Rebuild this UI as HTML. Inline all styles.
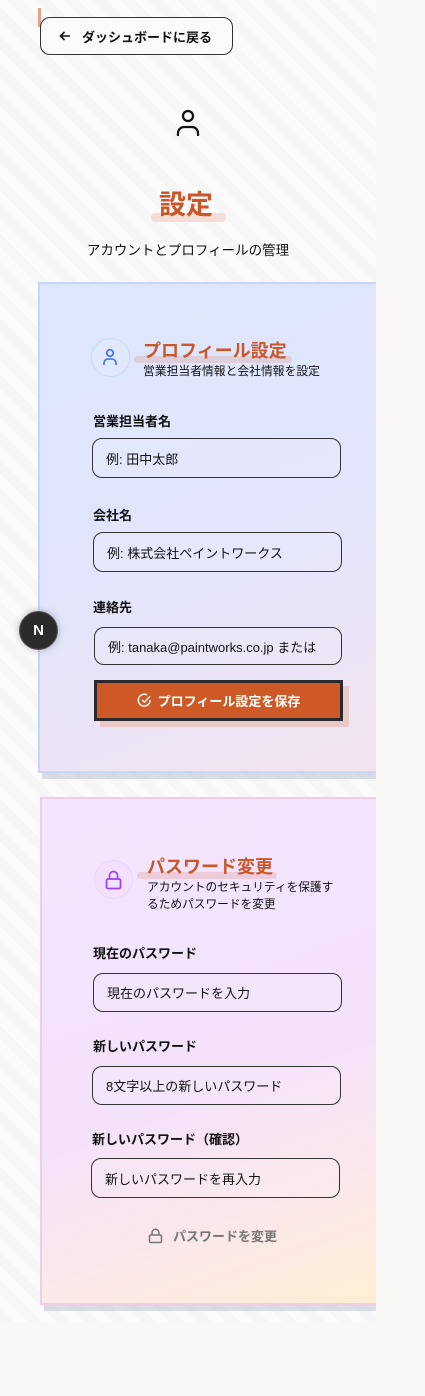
<!DOCTYPE html>
<html><head><meta charset="utf-8"><style>
*{margin:0;padding:0;box-sizing:border-box}
body{width:425px;height:1396px;background:#f9f8f7;position:relative;font-family:"Liberation Sans","Noto Sans CJK JP",sans-serif;color:#111;overflow:hidden}
.wrap{position:absolute;left:0;top:0;width:376px;height:1322px;overflow:hidden;background:repeating-linear-gradient(45deg,#f6f6f6 0 10px,#fbfbfb 10px 20px)}
.a{position:absolute}
.card{position:absolute;box-shadow:4px 6px 0 rgba(160,165,185,.35)}
.inp{position:absolute;border:1.3px solid #333;border-radius:10px;font-size:13px;padding-left:13px;display:flex;align-items:center;background:rgba(255,255,255,.1)}
.lbl{position:absolute;font-size:13px;font-weight:bold}
.ttl{position:absolute;font-size:18px;font-weight:bold;color:#c9572a}
.hl{position:absolute;height:7px;border-radius:4px}
</style></head><body>
<div class="wrap">
<div class="a" style="left:38px;top:8px;width:3px;height:19px;background:#e8a088"></div>
<div class="a" style="left:40px;top:17px;width:193px;height:38px;border:1.3px solid #333;border-radius:10px;background:#fafafa;font-size:13px;font-weight:bold;display:flex;align-items:center">
<svg style="position:absolute;left:18px;top:12px" width="12" height="12" viewBox="0 0 12 12" fill="none" stroke="#111" stroke-width="1.6"><path d="M11 6H1.5M5.5 2 1.5 6l4 4"/></svg>
<span style="position:absolute;left:41px">ダッシュボードに戻る</span></div>
<svg class="a" style="left:176px;top:109px" width="24" height="28" viewBox="0 0 24 28" fill="none" stroke="#111" stroke-width="2.2"><circle cx="12" cy="7" r="5"/><path d="M2 27v-3a6 6 0 0 1 6-6h8a6 6 0 0 1 6 6v3"/></svg>
<div class="hl" style="left:151px;top:213px;width:75px;height:9px;background:#f3ddd4"></div>
<div class="a" style="left:159px;top:183px;font-size:27px;font-weight:bold;color:#c9572a">設定</div>
<div class="a" style="left:0;width:376px;top:239px;text-align:center;font-size:13.5px">アカウントとプロフィールの管理</div>

<div class="card" style="left:38px;top:282px;width:360px;height:491px;border:2px solid #c7d5f7;background:linear-gradient(160deg,#dce6fd 0%,#e3e5fb 55%,#f4e3f0 100%)"></div>
<div class="a" style="left:91px;top:338px;width:39px;height:39px;border-radius:50%;border:1.5px solid #c7d9fb;background:#dfe8fd"></div>
<svg class="a" style="left:102px;top:348px" width="16" height="18" viewBox="0 0 16 18" fill="none" stroke="#3a6df0" stroke-width="1.6"><circle cx="8" cy="5" r="3.3"/><path d="M2 17v-2a4 4 0 0 1 4-4h4a4 4 0 0 1 4 4v2"/></svg>
<div class="hl" style="left:134px;top:356px;width:158px;background:rgba(220,200,210,.8)"></div>
<div class="ttl" style="left:143px;top:337px">プロフィール設定</div>
<div class="a" style="left:143px;top:362px;font-size:11.8px">営業担当者情報と会社情報を設定</div>
<div class="lbl" style="left:93px;top:411px">営業担当者名</div>
<div class="inp" style="left:92px;top:438px;width:249px;height:40px">例: 田中太郎</div>
<div class="lbl" style="left:93px;top:505px">会社名</div>
<div class="inp" style="left:93px;top:532px;width:249px;height:40px">例: 株式会社ペイントワークス</div>
<div class="lbl" style="left:93px;top:597px">連絡先</div>
<div class="inp" style="left:94px;top:627px;width:248px;height:38px;white-space:nowrap;overflow:hidden">例: tanaka@paintworks.co.jp または</div>
<div class="a" style="left:100px;top:686px;width:249px;height:41px;background:#e9c8c8"></div>
<div class="a" style="left:94px;top:680px;width:249px;height:41px;background:#cd5a26;border:3px solid #2a2a2e;color:#fff;font-size:13px;font-weight:bold;display:flex;align-items:center;justify-content:center;gap:6px">
<svg width="15" height="15" viewBox="0 0 16 16" fill="none" stroke="#fff" stroke-width="1.5"><path d="M14 7.5A6.3 6.3 0 1 1 10.5 2"/><path d="M5.5 7.5l2.3 2.3L14 3.5"/></svg>プロフィール設定を保存</div>

<div class="card" style="left:40px;top:797px;width:360px;height:508px;border:2px solid #efcde4;background:linear-gradient(160deg,#f4e4fd 0%,#f4e2fb 55%,#fbe8e8 80%,#fdf0d3 100%)"></div>
<div class="a" style="left:94px;top:860px;width:39px;height:39px;border-radius:50%;border:1.5px solid #ead5fa;background:#f2e0fd"></div>
<svg class="a" style="left:105px;top:870px" width="17" height="20" viewBox="0 0 17 20" fill="none" stroke="#9a3ff0" stroke-width="1.7"><rect x="1.5" y="9" width="14" height="9.5" rx="1.5"/><path d="M4.5 9V5.5a4 4 0 0 1 8 0V9"/></svg>
<div class="hl" style="left:137px;top:872px;width:140px;background:rgba(235,200,215,.9)"></div>
<div class="ttl" style="left:147px;top:853px">パスワード変更</div>
<div class="a" style="left:147px;top:879px;font-size:11.7px;line-height:17px;width:200px">アカウントのセキュリティを保護す<br>るためパスワードを変更</div>
<div class="lbl" style="left:93px;top:943px">現在のパスワード</div>
<div class="inp" style="left:93px;top:973px;width:249px;height:39px">現在のパスワードを入力</div>
<div class="lbl" style="left:93px;top:1036px">新しいパスワード</div>
<div class="inp" style="left:92px;top:1066px;width:249px;height:39px">8文字以上の新しいパスワード</div>
<div class="lbl" style="left:92px;top:1129px">新しいパスワード（確認）</div>
<div class="inp" style="left:91px;top:1158px;width:249px;height:40px">新しいパスワードを再入力</div>
<div class="a" style="left:148px;top:1226px;font-size:13px;font-weight:bold;color:#777;display:flex;align-items:center;gap:10px">
<svg width="15" height="16" viewBox="0 0 15 16" fill="none" stroke="#777" stroke-width="1.5"><rect x="1.5" y="7" width="12" height="7.5" rx="1.2"/><path d="M4 7V4.8a3.5 3.5 0 0 1 7 0V7"/></svg>パスワードを変更</div>
</div>
<div class="a" style="left:19px;top:611px;width:39px;height:39px;border-radius:50%;background:#2b2b2b;border:1px solid #555;box-shadow:0 0 8px rgba(0,0,0,.25);color:#fff;font-size:15px;font-weight:bold;display:flex;align-items:center;justify-content:center">N</div>
</body></html>
